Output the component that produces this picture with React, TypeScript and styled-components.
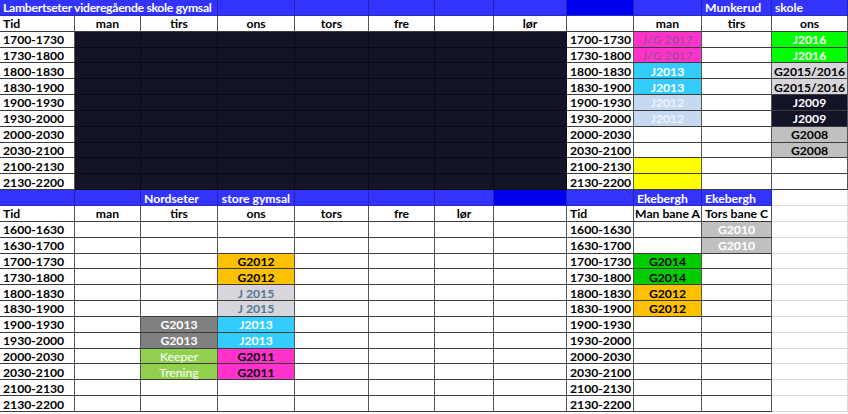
import styled, { createGlobalStyle } from 'styled-components';

const GlobalStyle = createGlobalStyle`
  html, body {
    margin: 0;
    padding: 0;
    background: #ffffff;
  }
`;

const COLS = [75, 66, 77, 77, 74, 66, 59, 73, 67, 68, 70, 76];

const BLUE = '#3333ff';
const BRIGHT = '#0000f0';
const DARK = '#141428';
const PINK = '#ff33cc';
const CYAN = '#33ccff';
const LIME = '#00ff00';
const GREEN = '#00cc00';
const LEAF = '#92d050';
const GREY = '#808080';
const PALE = '#d9d5dc';
const SILVER = '#c0c0c0';
const ORANGE = '#ffc000';
const YELLOW = '#ffff00';
const SKY = '#c5d9f1';

type Line = 'dark' | 'block' | 'blue' | 'light';

const LINES: Record<Line, { v: string; h: string }> = {
  dark: { v: '#555555', h: '#3c3c3c' },
  block: { v: '#0a0a16', h: '#0a0a16' },
  blue: { v: '#2424a8', h: '#2a2ac8' },
  light: { v: '#dadada', h: '#dadada' },
};

type Spec = {
  text?: string;
  bg?: string;
  fg?: string;
  align?: 'flex-start' | 'center';
  span?: number;
  line?: Line;
  weight?: number;
  tight?: boolean;
};

const Sheet = styled.div`
  display: grid;
  grid-template-columns: ${COLS.map((c) => `${c}px`).join(' ')};
  grid-auto-rows: 15.85px;
  width: 848px;
  height: 414px;
  overflow: hidden;
  font-family: Lato, 'Open Sans', sans-serif;
  font-size: 12.2px;
`;

const Cell = styled.div<{
  $bg: string;
  $fg: string;
  $align: string;
  $line: Line;
  $span: number;
  $weight: number;
  $tight: boolean;
}>`
  grid-column: span ${(p) => p.$span};
  display: flex;
  align-items: center;
  justify-content: ${(p) => p.$align};
  box-sizing: border-box;
  padding: 1px 3px 0;
  background: ${(p) => p.$bg};
  color: ${(p) => p.$fg};
  font-weight: ${(p) => p.$weight};
  letter-spacing: ${(p) => (p.$tight ? '-0.3px' : 'normal')};
  border-right: 1px solid ${(p) => LINES[p.$line].v};
  border-bottom: 1px solid ${(p) => LINES[p.$line].h};
  white-space: nowrap;
  overflow: hidden;
`;

const blank: Spec = {};
const light: Spec = { line: 'light' };
const dark: Spec = { bg: DARK, line: 'block' };
const blue = (text = '', align: Spec['align'] = 'flex-start'): Spec => ({
  text,
  bg: BLUE,
  fg: '#ffffff',
  line: 'blue',
  align,
});
const bright: Spec = { bg: BRIGHT, line: 'blue' };
const head = (text: string): Spec => ({ text, align: 'center' });
const time = (text: string): Spec => ({ text });
const tag = (text: string, bg: string, fg = '#000000', weight = 700): Spec => ({
  text,
  bg,
  fg,
  align: 'center',
  weight,
});

const TOP_TIMES = [
  '1700-1730', '1730-1800', '1800-1830', '1830-1900', '1900-1930',
  '1930-2000', '2000-2030', '2030-2100', '2100-2130', '2130-2200',
];

const BOTTOM_TIMES = ['1600-1630', '1630-1700', ...TOP_TIMES];

const munkerudMan: Spec[] = [
  tag('J/G 2017', PINK, '#a8489a'),
  tag('J/G 2017', PINK, '#a8489a'),
  tag('J2013', CYAN, '#ffffff'),
  tag('J2013', CYAN, '#ffffff'),
  tag('J2012', SKY, '#eef4fb'),
  tag('J2012', SKY, '#eef4fb'),
  blank,
  blank,
  { bg: YELLOW },
  { bg: YELLOW },
];

const munkerudOns: Spec[] = [
  tag('J2016', LIME, '#ffffff'),
  tag('J2016', LIME, '#ffffff'),
  tag('G2015/2016', PALE),
  tag('G2015/2016', PALE),
  tag('J2009', DARK, '#ffffff'),
  tag('J2009', DARK, '#ffffff'),
  tag('G2008', SILVER),
  tag('G2008', SILVER),
  blank,
  blank,
];

const nordTirs: Record<number, Spec> = {
  6: tag('G2013', GREY, '#ffffff'),
  7: tag('G2013', GREY, '#ffffff'),
  8: tag('Keeper', LEAF, '#ffffff', 400),
  9: tag('Trening', LEAF, '#ffffff', 400),
};

const nordOns: Record<number, Spec> = {
  2: tag('G2012', ORANGE),
  3: tag('G2012', ORANGE),
  4: tag('J 2015', PALE, '#4f7a94'),
  5: tag('J 2015', PALE, '#4f7a94'),
  6: tag('J2013', CYAN, '#ffffff'),
  7: tag('J2013', CYAN, '#ffffff'),
  8: tag('G2011', PINK),
  9: tag('G2011', PINK),
};

const ekeMan: Record<number, Spec> = {
  2: tag('G2014', GREEN),
  3: tag('G2014', GREEN),
  4: tag('G2012', ORANGE),
  5: tag('G2012', ORANGE),
};

const ekeTors: Record<number, Spec> = {
  0: tag('G2010', SILVER, '#ffffff'),
  1: tag('G2010', SILVER, '#ffffff'),
};

const rows: Spec[][] = [
  [
    { ...blue('Lambertseter videregående skole gymsal'), span: 3, tight: true },
    blue(), blue(), blue(), blue(), blue(),
    bright,
    blue(),
    blue('Munkerud'),
    blue('skole'),
  ],
  [
    time('Tid'), head('man'), head('tirs'), head('ons'), head('tors'), head('fre'),
    blank, head('lør'), blank, head('man'), head('tirs'), head('ons'),
  ],
  ...TOP_TIMES.map((t, i) => [
    time(t), dark, dark, dark, dark, dark, dark, dark,
    time(t), munkerudMan[i], blank, munkerudOns[i],
  ]),
  [
    blue(), blue(), blue('Nordseter'), blue('store gymsal', 'center'), blue(), blue(), blue(),
    bright, blue(), blue('Ekebergh'), blue('Ekebergh'), light,
  ],
  [
    time('Tid'), head('man'), head('tirs'), head('ons'), head('tors'), head('fre'), head('lør'),
    blank, time('Tid'), head('Man bane A'), head('Tors bane C'), light,
  ],
  ...BOTTOM_TIMES.map((t, i) => [
    time(t), blank, nordTirs[i] ?? blank, nordOns[i] ?? blank, blank, blank, blank, blank,
    time(t), ekeMan[i] ?? blank, ekeTors[i] ?? blank, light,
  ]),
];

export default function App() {
  return (
    <>
      <GlobalStyle />
      <Sheet>
        {rows.map((row, r) =>
          row.map((c, k) => (
            <Cell
              key={`${r}-${k}`}
              $bg={c.bg ?? '#ffffff'}
              $fg={c.fg ?? '#000000'}
              $align={c.align ?? 'flex-start'}
              $line={c.line ?? 'dark'}
              $span={c.span ?? 1}
              $weight={c.weight ?? 700}
              $tight={c.tight ?? false}
            >
              {c.text}
            </Cell>
          ))
        )}
      </Sheet>
    </>
  );
}
